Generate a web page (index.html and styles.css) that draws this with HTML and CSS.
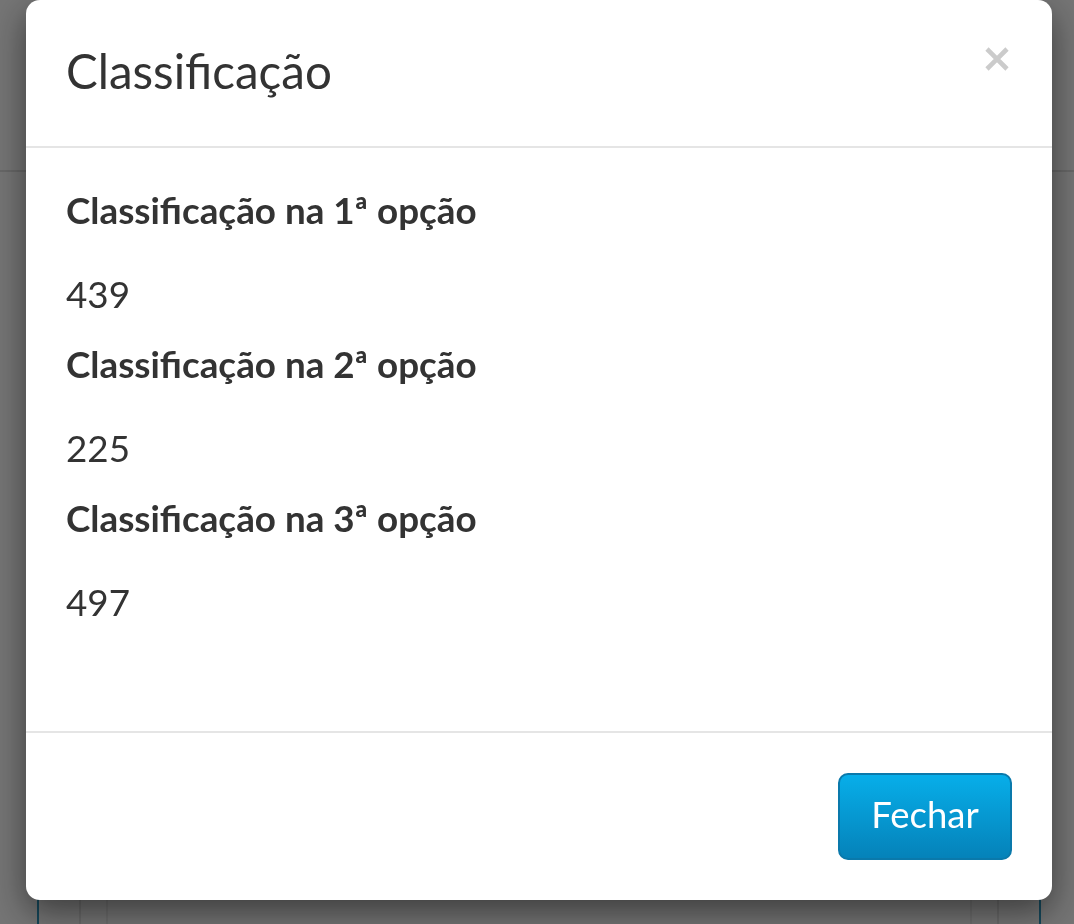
FILE: index.html
```html
<!DOCTYPE html>
<html lang="pt">
<head>
    <meta charset="UTF-8">
    <meta name="viewport" content="width=device-width, initial-scale=1.0">
    <title>Classificação</title>
    <link rel="stylesheet" href="styles.css">
</head>
<body>
    <div class="page">
        <div class="page-header"></div>
        <div class="page-panel">
            <div class="page-column">
                <div class="page-inner"></div>
            </div>
        </div>
    </div>

    <div class="backdrop">
        <div class="modal">
            <div class="modal-header">
                <h4 class="modal-title">Classificação</h4>
                <button class="close" type="button" aria-label="Fechar">
                    <svg width="26" height="26" viewBox="0 0 26 26">
                        <path d="M3 3 L23 23 M23 3 L3 23" stroke="#cbcbcb" stroke-width="4.6" fill="none"/>
                    </svg>
                </button>
            </div>
            <div class="modal-body">
                <h4 class="label">Classificação na 1ª opção</h4>
                <p class="value">439</p>
                <h4 class="label">Classificação na 2ª opção</h4>
                <p class="value">225</p>
                <h4 class="label">Classificação na 3ª opção</h4>
                <p class="value">497</p>
            </div>
            <div class="modal-footer">
                <button class="btn" type="button">Fechar</button>
            </div>
        </div>
    </div>
</body>
</html>
```

FILE: styles.css
```css
body {
    margin: 0;
    height: 924px;
    overflow: hidden;
    background-color: #ebebeb;
    font-family: Lato, "Open Sans", sans-serif;
    color: #333;
}
.page-header {
    height: 170px;
    border-bottom: 2px solid #d0d0d0;
}
.page-panel {
    margin: 0 33px 0 37px;
    height: 760px;
    border-left: 2px solid #2a8fb5;
    border-right: 2px solid #2a8fb5;
    padding: 0 40px;
}
.page-column {
    height: 100%;
    border-left: 2px solid #d5d5d5;
    border-right: 2px solid #d5d5d5;
    padding: 0 25px;
}
.page-inner {
    height: 100%;
    border-left: 2px solid #dcdcdc;
    border-right: 2px solid #dcdcdc;
}
.backdrop {
    position: fixed;
    top: 0;
    left: 0;
    right: 0;
    bottom: 0;
    background-color: rgba(0, 0, 0, 0.5);
}
.modal {
    margin: 0 22px 0 26px;
    background-color: #fff;
    border-radius: 14px;
    box-shadow: 0 12px 35px rgba(0, 0, 0, 0.5);
    height: 900px;
    display: flex;
    flex-direction: column;
}
.modal-header {
    display: flex;
    justify-content: space-between;
    align-items: flex-start;
    padding: 41px 42px 45px 40px;
    border-bottom: 2px solid #e5e5e5;
}
.modal-title {
    margin: 0;
    font-size: 47.5px;
    font-weight: 400;
    line-height: 60px;
}
.close {
    background: none;
    border: none;
    padding: 0;
    margin-top: 5px;
    cursor: pointer;
}
.close svg {
    display: block;
}
.modal-body {
    flex: 1;
    padding: 40px 40px 0;
}
.label {
    margin: 0 0 40px;
    font-size: 36.8px;
    font-weight: 700;
    line-height: 44px;
}
.value {
    margin: 0 0 26px;
    font-size: 36.8px;
    line-height: 44px;
}
.modal-footer {
    display: flex;
    justify-content: flex-end;
    padding: 40px;
    border-top: 2px solid #e5e5e5;
}
.btn {
    width: 174px;
    height: 87px;
    padding: 0 0 6px;
    font-family: Lato, sans-serif;
    font-size: 36.5px;
    color: #fff;
    background: linear-gradient(#07aee9, #0582b9);
    border: 2px solid #0a79ab;
    border-radius: 10px;
    cursor: pointer;
}
```
